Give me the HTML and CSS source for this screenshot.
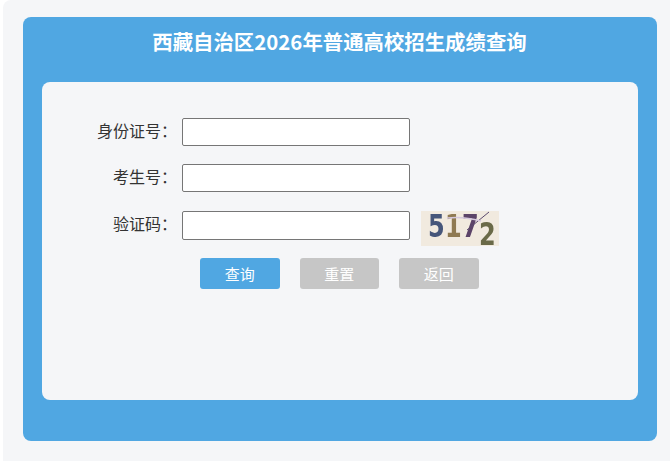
FILE: index.html

```html
<!DOCTYPE html>
<html lang="zh-CN">
<head>
    <meta charset="UTF-8">
    <title>西藏自治区2026年普通高校招生成绩查询</title>
    <link rel="stylesheet" href="styles.css">
</head>
<body>
    <div class="page">
        <div class="panel">
            <h1 class="title">西藏自治区2026年普通高校招生成绩查询</h1>
            <div class="content">
                <form class="query-form">
                    <div class="form-group">
                        <label for="id-card">身份证号：</label>
                        <input type="text" id="id-card">
                    </div>
                    <div class="form-group exam-row">
                        <label for="exam-no">考生号：</label>
                        <input type="text" id="exam-no">
                    </div>
                    <div class="form-group captcha-row">
                        <label for="captcha">验证码：</label>
                        <input type="text" id="captcha">
                        <div class="captcha">
                            <span class="digit d1">5</span>
                            <span class="digit d2">1</span>
                            <span class="digit d3">7</span>
                            <span class="digit d4">2</span>
                            <svg class="noise" width="78" height="35" viewBox="0 0 78 35">
                                <path d="M46 19 L68 1" stroke="#5b4a6e" stroke-width="1" fill="none"/>
                                <path d="M26 7 Q42 5 60 10" stroke="#d5c8dc" stroke-width="1.5" fill="none"/>
                            </svg>
                        </div>
                    </div>
                    <div class="buttons">
                        <button type="button" class="btn btn-primary">查询</button>
                        <button type="button" class="btn">重置</button>
                        <button type="button" class="btn">返回</button>
                    </div>
                </form>
            </div>
        </div>
    </div>
</body>
</html>
```

FILE: styles.css

```css
* {
    box-sizing: border-box;
}

body {
    margin: 0;
    background-color: #fff;
    font-family: "Noto Sans CJK SC", "Noto Sans", sans-serif;
}

.page {
    height: 461px;
    margin-left: 3px;
    padding: 17px 13.5px 20px 19.5px;
    background-color: #f5f6f8;
    border-radius: 8px 0 0 0;
}

.panel {
    height: 424px;
    padding: 0 19px;
    background-color: #50a7e2;
    border-radius: 8px;
}

.title {
    height: 65px;
    margin: 0;
    padding-top: 6px;
    color: #fff;
    font-size: 20.4px;
    font-weight: 700;
    line-height: 36px;
    text-align: center;
}

.content {
    height: 318px;
    padding-top: 36px;
    background-color: #f5f6f8;
    border-radius: 8px;
}

.form-group {
    display: flex;
    align-items: flex-start;
    height: 28px;
    margin-bottom: 18px;
}

.exam-row {
    margin-bottom: 19px;
}

.captcha-row {
    height: 29px;
    margin-bottom: 18px;
}

label {
    width: 140.5px;
    padding-right: 5px;
    color: #333;
    font-size: 16px;
    line-height: 25px;
    text-align: right;
}

input[type="text"] {
    width: 228px;
    height: 100%;
    background-color: #fff;
    border: 1px solid #767676;
    border-radius: 2px;
}

.captcha {
    position: relative;
    flex-shrink: 0;
    width: 78px;
    height: 35px;
    margin-left: 11px;
    background-color: #f1eadf;
    font-family: "DejaVu Sans", sans-serif;
    font-weight: 700;
    filter: blur(0.4px);
}

.digit {
    position: absolute;
    font-size: 32px;
    line-height: 24px;
    transform: scaleX(0.75);
    transform-origin: left top;
}

.d1 {
    left: 7px;
    top: 3px;
    color: #46567a;
}

.d2 {
    left: 24px;
    top: 3px;
    color: #8f7a52;
}

.d3 {
    left: 41px;
    top: 3px;
    color: #5c4468;
}

.d4 {
    left: 58px;
    top: 11px;
    color: #6a6a48;
}

.noise {
    position: absolute;
    left: 0;
    top: 0;
}

.buttons {
    display: flex;
    gap: 20px;
    margin-left: 158.5px;
}

.btn {
    width: 79.5px;
    height: 31px;
    padding: 0;
    color: #fff;
    background-color: #c6c6c6;
    border: none;
    border-radius: 3px;
    font-family: inherit;
    font-size: 15px;
    cursor: pointer;
}

.btn-primary {
    background-color: #50a7e2;
}
```
